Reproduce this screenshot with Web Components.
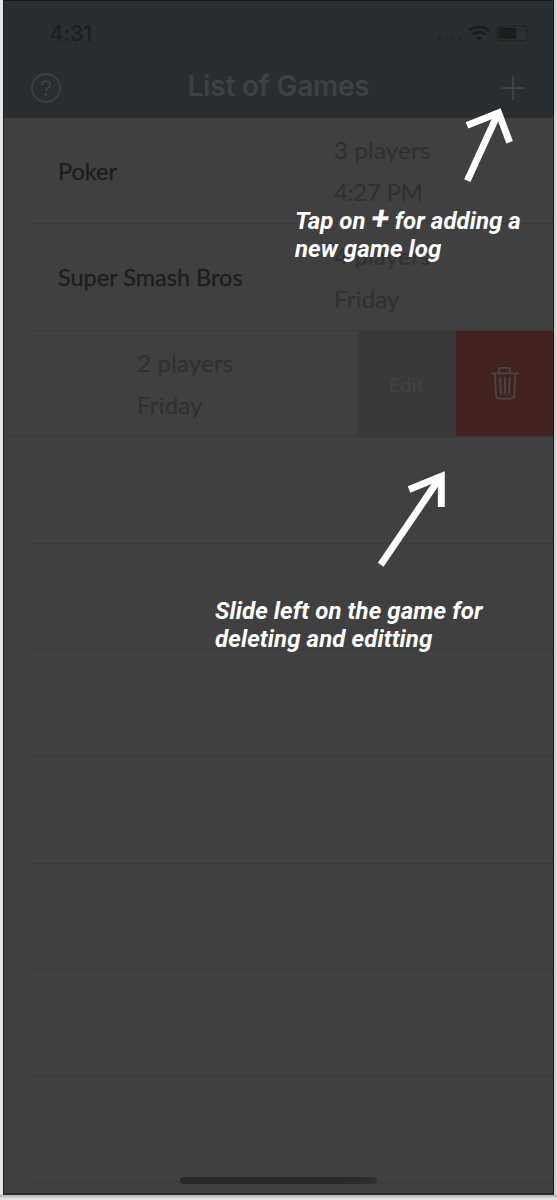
<!DOCTYPE html>
<html lang="en">
<head>
<meta charset="utf-8">
<title>List of Games</title>
<style>
html,body{margin:0;height:1200px;overflow:hidden;background:#e6e6e6}
body{font-family:Lato,"Liberation Sans",sans-serif}
</style>
</head>
<body>
<game-screen>
  <status-bar time="4:31"></status-bar>
  <nav-bar>List of Games</nav-bar>
  <game-list>
    <game-row name="Poker"><span>3 players</span><span style="letter-spacing:-.3px">4:27 PM</span></game-row>
    <game-row name="Super Smash Bros"><span>4 players</span><span>Friday</span></game-row>
    <game-row swiped><span>2 players</span><span>Friday</span></game-row>
    <game-row></game-row><game-row></game-row><game-row></game-row>
    <game-row></game-row><game-row></game-row><game-row></game-row><game-row></game-row>
  </game-list>
  <coach-mark slot="over" style="left:291px;top:206px;--sp:.06px">Tap on <b>+</b> for adding a<br>new game log</coach-mark>
  <coach-mark slot="over" style="left:211px;top:596px;--sp:.1px">Slide left on the game for<br>deleting and editting</coach-mark>
  <coach-arrow slot="over" style="left:453px;top:97px" shaft="M10.3 82.6 40.8 16" head="M10 27.4 41.6 14.7 52.6 44.3"></coach-arrow>
  <coach-arrow slot="over" style="left:393px;top:459px" shaft="M-16.3 104.8 42 19" head="M12 29.5 44.3 16.3V47"></coach-arrow>
</game-screen>
<script>
const define = (name, html, setup) => customElements.define(name, class extends HTMLElement {
  connectedCallback() {
    if (this.shadowRoot) return;
    this.attachShadow({mode: 'open'}).innerHTML = html;
    if (setup) setup(this, this.shadowRoot);
  }
});

define('game-screen', `<style>
:host{display:block;box-sizing:border-box;width:557px;height:1200px;padding:0 3px 5px;
background:linear-gradient(#0000 1194px,#b8b8b8 1195px,#c4c4c4 1197px,#dedede 1198px,#e6e6e6),linear-gradient(90deg,#e9e9e9 1px,#dcdcdc 3px 554px,#c9c9c9 555px,#dedede)}
.phone{position:relative;box-sizing:border-box;height:1195px;border:1px solid #141719;border-left-color:#262727;border-bottom:2px solid #2c2c2c;background:#404040;overflow:hidden;display:flex;flex-direction:column}
.home{position:absolute;left:176px;top:1176px;width:197px;height:7px;border-radius:4px;background:linear-gradient(90deg,#292929 80%,#303030)}
</style><div class="phone"><slot></slot><div class="home"></div><slot name="over"></slot></div>`);

define('status-bar', `<style>
:host{display:flex;flex:none;height:62px;background:#282e31;color:#1b1d1e;font:500 21.5px/64px Inter,sans-serif}
.time{padding-left:45.5px;flex:1;letter-spacing:-.1px}
svg{display:block;flex:none}
</style><span class="time"></span>
<svg width="120" height="62" fill="#1b1c1c"><g fill="#22272a"><circle cx="6.5" cy="37.3" r="2.2"/><circle cx="13.3" cy="37.3" r="2.2"/><circle cx="20.1" cy="37.3" r="2.2"/><circle cx="26.6" cy="37.3" r="2.2"/></g>
<g fill="none" stroke="#1b1c1c" stroke-width="3.2"><path d="M36.2 29.7a14.3 14.3 0 0 1 19.6 0"/><path d="M39.8 33.6a9 9 0 0 1 12.4 0"/></g><path d="M46 39.9l-3.2-3.2a4.7 4.7 0 0 1 6.4 0z"/>
<rect x="63.5" y="24.6" width="30.6" height="15" rx="4" fill="none" stroke="#202426" stroke-width="1.2"/><rect x="65.4" y="26.4" width="18" height="11.4" rx="2"/><path d="M96.5 30v4.6q1.5-.7 1.5-2.3t-1.5-2.3z" fill="#202426"/></svg>`,
(h, r) => r.querySelector('.time').textContent = h.getAttribute('time'));

define('nav-bar', `<style>
:host{display:grid;grid-template-columns:90px 1fr 90px;flex:none;box-sizing:border-box;height:54.5px;background:#282e31;color:#404242;font:600 27.9px/47px Inter,sans-serif;text-align:center}
svg{display:block}
.t{letter-spacing:-.15px}
</style>
<svg width="90" height="54" fill="none" stroke="#404242" stroke-width="1.8"><circle cx="42" cy="25" r="14"/><path d="M37.9 22.2c0-5.3 8.2-5.2 8.2-.4 0 3.3-4.1 3.2-4.1 6.6" stroke-width="1.9"/><circle cx="42" cy="31.4" r="1.3" fill="#404242" stroke="none"/></svg>
<span class="t"><slot></slot></span>
<svg width="90" height="54" fill="none" stroke="#444646" stroke-width="1.8"><path d="M38.5 25.2h23M50 13.3v23.6"/></svg>`);

define('game-list', `<style>
:host{display:grid;flex:none;grid-auto-rows:106.6px}
</style><slot></slot>`);

define('game-row', `<style>
:host{display:flex;position:relative;min-width:0;overflow:hidden;font-size:24px;letter-spacing:.2px;color:#303030}
:host::after{content:"";position:absolute;left:28px;right:0;bottom:0;height:1px;background:#3a3a3a}
:host([swiped])::after{left:0}
.name{flex:none;box-sizing:border-box;width:330px;padding-left:54px;line-height:106px;color:#1e1e1e;font-size:23.5px;letter-spacing:0;white-space:nowrap;-webkit-text-stroke:.3px #1e1e1e}
.info{flex:1;display:flex;flex-direction:column;justify-content:center;padding-top:1px}
::slotted(span){line-height:42.8px;white-space:nowrap;-webkit-text-stroke:.2px #303030}
.acts{display:none;flex:none}
:host([swiped]) .name{width:133px}
:host([swiped]) .acts{display:flex}
.edit{width:98.5px;background:#393939;color:#434343;text-align:center;font-size:20px;line-height:106px;letter-spacing:.3px;-webkit-text-stroke:.2px #434343}
.del{width:97.5px;background:#422322}
svg{display:block}
</style><div class="name"></div><div class="info"><slot></slot></div>
<div class="acts"><div class="edit">Edit</div><div class="del"><svg width="98" height="107" fill="none" stroke="#4b4646" stroke-width="1.8" stroke-linecap="round" stroke-linejoin="round"><path d="M36 42.4h26M43 42v-3q0-2.2 2.2-2.2h6.6q2.2 0 2.2 2.2v3M38.8 42.6l1.2 22.2q.2 2.8 2.8 2.8h12.6q2.6 0 2.8-2.8l1.2-22.2M44.2 47l.7 15.7M49 47v15.7M53.8 47l-.7 15.7"/></svg></div></div>`,
(h, r) => {
  r.querySelector('.name').textContent = h.getAttribute('name') || '';
  if (!h.hasAttribute('swiped')) r.querySelector('.acts').remove();
});

define('coach-mark', `<style>
:host{position:absolute;color:#fff;font:italic 700 24px/28px Roboto,sans-serif;letter-spacing:var(--sp);white-space:nowrap}
::slotted(b){font-size:32px;line-height:0;font-weight:600;-webkit-text-stroke:.4px #fff}
</style><slot></slot>`);

define('coach-arrow', `<style>
:host{position:absolute;width:60px;height:110px}
svg{display:block;overflow:visible}
</style><svg width="60" height="110" fill="none" stroke="#fff" stroke-width="6.9" stroke-miterlimit="8"><path class="s"/><path class="h"/></svg>`,
(h, r) => {
  r.querySelector('.s').setAttribute('d', h.getAttribute('shaft'));
  r.querySelector('.h').setAttribute('d', h.getAttribute('head'));
});
</script>
</body>
</html>
